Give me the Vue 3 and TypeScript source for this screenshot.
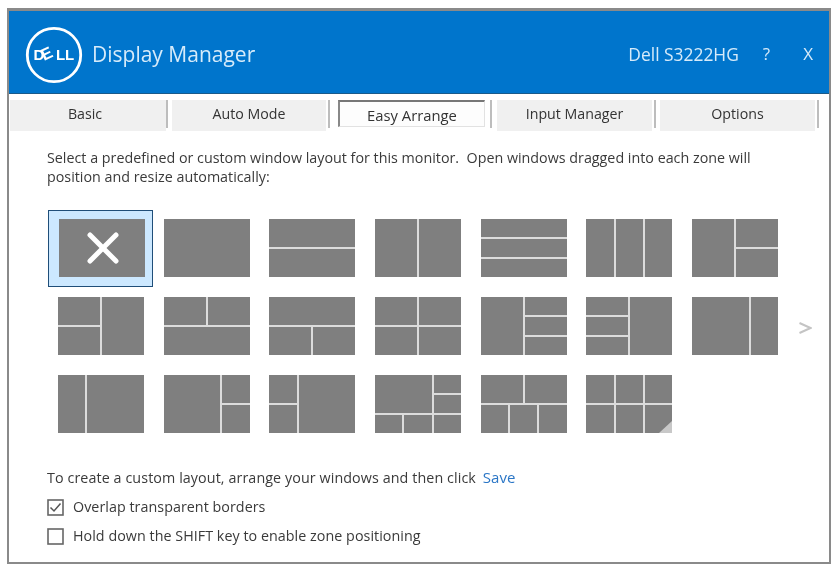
<script setup lang="ts">
const tabs = ['Basic', 'Auto Mode', 'Easy Arrange', 'Input Manager', 'Options']
const activeTab = 'Easy Arrange'

const layouts: string[][] = [
  ['a'], ['a'], ['a', 'b'], ['ab'], ['a', 'b', 'c'], ['abc'], ['ab', 'ac'],
  ['ab', 'cb'], ['ab', 'cc'], ['aa', 'bc'], ['ab', 'cd'], ['ab', 'ac', 'ad'], ['ad', 'bd', 'cd'], ['aab'],
  ['abb'], ['aab', 'aac'], ['abb', 'cbb'], ['aab', 'aac', 'def'], ['aaabbb', 'ccddee'], ['abc', 'def'],
]

function cellsOf(rows: string[]): string[] {
  return [...new Set(rows.join('').split(''))]
}
function gridStyle(rows: string[]) {
  return {
    gridTemplateColumns: `repeat(${rows[0].length}, 1fr)`,
    gridTemplateRows: `repeat(${rows.length}, 1fr)`,
    gridTemplateAreas: rows.map((r) => `"${r.split('').join(' ')}"`).join(' '),
  }
}
</script>

<template>
  <div class="page">
    <div class="window">
      <header class="banner">
        <svg class="logo" width="60" height="60" viewBox="0 0 60 60">
          <circle cx="30" cy="31" r="26.7" fill="none" stroke="#fff" stroke-width="2.8" />
          <text x="9.5" y="36" class="logo-text">D</text>
          <text x="0" y="0" class="logo-text logo-e" transform="translate(20 37) rotate(-25)">E</text>
          <text x="32" y="36" class="logo-text">L</text>
          <text x="41" y="36" class="logo-text">L</text>
        </svg>
        <span class="title">Display Manager</span>
        <span class="model">Dell S3222HG</span>
        <span class="help">?</span>
        <span class="close">X</span>
      </header>

      <nav class="tabs">
        <div v-for="t in tabs" :key="t" class="tab" :class="{ active: t === activeTab }">{{ t }}</div>
      </nav>

      <main class="content">
        <p class="intro">
          Select a predefined or custom window layout for this monitor.&nbsp; Open windows dragged into each zone will
          position and resize automatically:
        </p>

        <div class="gallery">
          <div class="grid">
            <div
              v-for="(rows, i) in layouts"
              :key="i"
              class="thumb"
              :class="{ selected: i === 0 }"
              :style="gridStyle(rows)"
            >
              <div
                v-for="c in cellsOf(rows)"
                :key="c"
                class="zone"
                :style="{ gridArea: c }"
              />
              <svg v-if="i === 0" class="x-mark" width="32" height="32" viewBox="0 0 32 32">
                <path d="M3 3 L29 29 M29 3 L3 29" stroke="#fff" stroke-width="5" stroke-linecap="round" />
              </svg>
              <span v-if="i === layouts.length - 1" class="corner" />
            </div>
          </div>
          <svg class="next" width="13" height="12" viewBox="0 0 13 12">
            <path d="M0.5 1 L11.5 6 L0.5 11" fill="none" stroke="#c4c4c4" stroke-width="2" />
          </svg>
        </div>

        <div class="footer">
          <p class="save-line">To create a custom layout, arrange your windows and then click <a class="save">Save</a></p>
          <label class="check">
            <svg class="box" width="17" height="17" viewBox="0 0 17 17">
              <rect x="1" y="1" width="15" height="15" fill="#fff" stroke="#666" stroke-width="1.6" />
              <path d="M3.5 8.5 L7 12 L13.5 4.5" fill="none" stroke="#555" stroke-width="1.5" />
            </svg>
            Overlap transparent borders
          </label>
          <label class="check">
            <svg class="box" width="17" height="17" viewBox="0 0 17 17">
              <rect x="1" y="1" width="15" height="15" fill="#fff" stroke="#666" stroke-width="1.6" />
            </svg>
            Hold down the SHIFT key to enable zone positioning
          </label>
        </div>
      </main>
    </div>
  </div>
</template>

<style>
html, body { margin: 0; background: #fff; }
</style>

<style scoped>
.page {
  width: 840px;
  height: 572px;
  box-sizing: border-box;
  padding: 8px 9px 8px 7px;
  font-family: "Open Sans", "Noto Sans", sans-serif;
  color: #3a3a3a;
  overflow: hidden;
}
.window {
  height: 100%;
  box-sizing: border-box;
  border: 2px solid #8a8a8a;
  border-top-width: 3px;
  display: flex;
  flex-direction: column;
  background: #fff;
  filter: blur(0.35px);
}
.banner {
  height: 83px;
  flex: none;
  background: #0075cc;
  border-bottom: 1px solid #1a5a8a;
  box-sizing: border-box;
  display: flex;
  align-items: center;
  padding: 3px 16px 0 15px;
  color: #d6ebfa;
}
.logo { flex: none; }
.logo-text {
  font-family: "Liberation Sans", sans-serif;
  font-weight: 700;
  font-size: 15px;
  fill: #fff;
}
.logo-e { font-size: 16.5px; }
.title { font-size: 21px; margin-left: 8px; }
.model { font-size: 17.4px; margin-left: auto; }
.help { font-size: 17px; margin-left: 24px; }
.close { font-size: 17px; margin-left: 33px; }

.tabs {
  display: flex;
  flex: none;
  padding: 6px 0 0 1px;
  height: 37px;
  box-sizing: border-box;
  gap: 6px;
}
.tab {
  width: 155px;
  height: 31px;
  box-sizing: border-box;
  background: #f0f0f0;
  font-size: 14.2px;
  line-height: 27px;
  text-align: center;
  position: relative;
  color: #333;
}
.tab::after {
  content: '';
  position: absolute;
  right: -4px;
  top: 0;
  width: 2px;
  height: 28px;
  background: #bdbdbd;
}
.tab:first-child { width: 156px; padding-right: 6px; }
.tab:first-child::after { right: -2px; }
.tab:nth-child(2) { width: 154px; }
.tab:nth-child(4) { margin-right: 2px; }
.tab.active {
  width: 147px;
  height: 27px;
  margin: 0 6px;
  background: #fdfdfd;
  border-top: 2px solid #777;
  border-left: 2px solid #888;
  border-right: 1px solid #e2e2e2;
  border-bottom: 1px solid #e2e2e2;
  font-size: 14.8px;
  line-height: 27px;
}
.tab.active::after { right: -8px; top: -2px; }

.content {
  flex: 1;
  padding: 17px 0 0 38px;
  display: flex;
  flex-direction: column;
  min-height: 0;
}
.intro {
  margin: 0;
  font-size: 14.3px;
  line-height: 19px;
  width: 760px;
}
.gallery {
  display: flex;
  align-items: center;
  margin-top: 33px;
  padding-left: 11px;
}
.grid {
  display: grid;
  grid-template-columns: repeat(7, 86px);
  grid-auto-rows: 58px;
  column-gap: 19.7px;
  row-gap: 20px;
  flex: none;
}
.thumb {
  display: grid;
  gap: 2px;
  background: #dcdcdc;
  position: relative;
  width: 86px;
  height: 58px;
}
.zone { background: #7f7f7f; }
.thumb.selected {
  margin-left: 1px;
  z-index: 1;
}
.thumb.selected::before {
  content: '';
  position: absolute;
  left: -11px;
  right: -8px;
  top: -9px;
  bottom: -10px;
  background: #cce8ff;
  border: 1px solid #1f4e79;
  z-index: -1;
}
.x-mark {
  position: absolute;
  left: 27.5px;
  top: 13px;
}
.corner {
  position: absolute;
  right: 0;
  bottom: 0;
  width: 0;
  height: 0;
  border-style: solid;
  border-width: 0 0 12px 13px;
  border-color: transparent transparent #c8c8c8 transparent;
}
.next { margin: 3px 0 0 21px; flex: none; }

.footer {
  margin-top: 34px;
  font-size: 14.3px;
  display: flex;
  flex-direction: column;
  gap: 9px;
  line-height: 20px;
  letter-spacing: 0.04px;
}
.save-line { margin: 0 0 1px; letter-spacing: 0.09px; height: 20px; }
.save { color: #2a76c6; margin-left: 3px; font-size: 15px; }
.check {
  display: flex;
  align-items: center;
  gap: 9px;
}
.box { flex: none; }
</style>
